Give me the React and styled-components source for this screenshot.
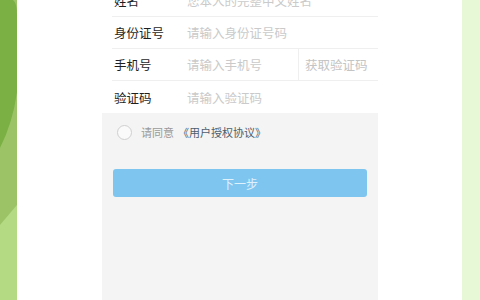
import React from 'react';
import styled, { createGlobalStyle } from 'styled-components';

const GlobalStyle = createGlobalStyle`
	html, body {
		margin: 0;
		padding: 0;
		background: #fff;
	}
	body {
		font-family: "Noto Sans CJK SC", "Noto Sans", sans-serif;
	}
`;

const Page = styled.div`
	display: flex;
	width: 480px;
	height: 300px;
	overflow: hidden;
	background: #fff;
`;

const LeftDecor = styled.svg`
	flex: 0 0 17px;
	width: 17px;
	height: 300px;
	display: block;
`;

const Gutter = styled.div`
	flex: 0 0 ${(props) => props.$w}px;
	background: #fff;
`;

const RightStrip = styled.div`
	flex: 1;
	background: #e7f8d7;
`;

const Phone = styled.div`
	flex: 0 0 276px;
	display: flex;
	flex-direction: column;
	background: #f4f4f4;
`;

const Form = styled.div`
	background: #fff;
	margin-top: -15px;
`;

const Row = styled.div`
	display: flex;
	align-items: stretch;
	height: 32px;
	margin-left: 10px;
	padding-left: 2px;
	border-bottom: ${(props) => (props.$last ? 'none' : '1px solid #efefef')};
	box-sizing: border-box;
`;

const Label = styled.span`
	flex: 0 0 73px;
	display: flex;
	align-items: center;
	font-size: 12.5px;
	color: #1e1e1e;
`;

const Placeholder = styled.span`
	flex: 1;
	display: flex;
	align-items: center;
	font-size: 12.5px;
	color: #cacaca;
`;

const CodeButton = styled.span`
	flex: 0 0 80px;
	display: flex;
	align-items: center;
	padding-left: 6px;
	box-sizing: border-box;
	border-left: 1px solid #efefef;
	font-size: 12.5px;
	color: #c4c4c4;
`;

const Agreement = styled.div`
	display: flex;
	align-items: center;
	height: 36px;
	padding-left: 15px;
	margin-top: 1px;
`;

const Radio = styled.span`
	width: 15px;
	height: 15px;
	border-radius: 50%;
	border: 1px solid #cfcfcf;
	box-sizing: border-box;
	background: #fafafa;
	margin-right: 9px;
`;

const AgreeText = styled.span`
	font-size: 11px;
	color: #9a9a9a;
`;

const AgreeLink = styled.span`
	font-size: 11px;
	color: #4d5d6d;
	margin-left: 4px;
`;

const NextButton = styled.div`
	margin: 19px 11px 0 11px;
	height: 28px;
	border-radius: 3px;
	background: #7ec5f0;
	display: flex;
	align-items: center;
	justify-content: center;
	font-size: 12px;
	color: #dff1fc;
`;

export default function App() {
	return (
		<>
			<GlobalStyle />
			<Page>
				<LeftDecor viewBox='0 0 17 300'>
					<rect x='0' y='0' width='17' height='300' fill='#b4db84' />
					<path d='M0,0 L17,0 L17,205 L0,225 Z' fill='#9cc467' />
					<path d='M0,0 L13,0 Q17,3 17,14 L17,92 Q13,122 0,148 Z' fill='#7bb045' />
				</LeftDecor>
				<Gutter $w={85} />
				<Phone>
					<Form>
						<Row>
							<Label>姓名</Label>
							<Placeholder>您本人的完整中文姓名</Placeholder>
						</Row>
						<Row>
							<Label>身份证号</Label>
							<Placeholder>请输入身份证号码</Placeholder>
						</Row>
						<Row>
							<Label>手机号</Label>
							<Placeholder>请输入手机号</Placeholder>
							<CodeButton>获取验证码</CodeButton>
						</Row>
						<Row $last>
							<Label>验证码</Label>
							<Placeholder>请输入验证码</Placeholder>
						</Row>
					</Form>
					<Agreement>
						<Radio />
						<AgreeText>请同意</AgreeText>
						<AgreeLink>《用户授权协议》</AgreeLink>
					</Agreement>
					<NextButton>下一步</NextButton>
				</Phone>
				<Gutter $w={84} />
				<RightStrip />
			</Page>
		</>
	);
}
